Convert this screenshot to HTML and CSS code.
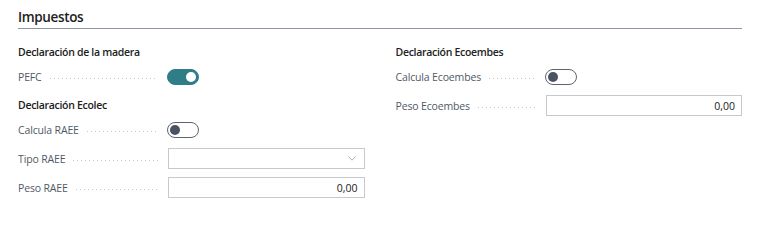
FILE: index.html
```html
<!DOCTYPE html>
<html lang="es">
<head>
<meta charset="utf-8">
<title>Impuestos</title>
<link rel="stylesheet" href="styles.css">
</head>
<body>
<div class="page">
  <h2 class="title">Impuestos</h2>
  <div class="columns">
    <div class="col">
      <div class="group">
        <div class="group-head">Declaración de la madera</div>
        <div class="row">
          <div class="label"><span class="label-text">PEFC</span><span class="leader"></span></div>
          <div class="field"><span class="toggle on"><span class="knob"></span></span></div>
        </div>
      </div>
      <div class="group group-next">
        <div class="group-head">Declaración Ecolec</div>
        <div class="row">
          <div class="label"><span class="label-text">Calcula RAEE</span><span class="leader"></span></div>
          <div class="field"><span class="toggle"><span class="knob"></span></span></div>
        </div>
        <div class="row row-input">
          <div class="label"><span class="label-text">Tipo RAEE</span><span class="leader"></span></div>
          <div class="field">
            <div class="box select">
              <span class="value"></span>
              <svg class="chev" width="8" height="5" viewBox="0 0 8 5"><path d="M0.4 0.5 L4 4.2 L7.6 0.5" fill="none" stroke="#a2a5a9" stroke-width="0.9"/></svg>
            </div>
          </div>
        </div>
        <div class="row row-input">
          <div class="label"><span class="label-text">Peso RAEE</span><span class="leader"></span></div>
          <div class="field"><div class="box num"><span class="value">0,00</span></div></div>
        </div>
      </div>
    </div>
    <div class="col">
      <div class="group">
        <div class="group-head">Declaración Ecoembes</div>
        <div class="row">
          <div class="label"><span class="label-text">Calcula Ecoembes</span><span class="leader"></span></div>
          <div class="field"><span class="toggle"><span class="knob"></span></span></div>
        </div>
        <div class="row row-input">
          <div class="label"><span class="label-text">Peso Ecoembes</span><span class="leader"></span></div>
          <div class="field"><div class="box num"><span class="value">0,00</span></div></div>
        </div>
      </div>
    </div>
  </div>
</div>
</body>
</html>
```
FILE: styles.css
```css
* { box-sizing: border-box; }
html, body {
  margin: 0;
  padding: 0;
  background: #ffffff;
}
body {
  font-family: "Open Sans", "Segoe UI", "Noto Sans", sans-serif;
  color: #212121;
  width: 768px;
  height: 207px;
  overflow: hidden;
}
.page {
  padding: 0 26px 0 18px;
}
.title {
  margin: 0;
  font-size: 13.5px;
  font-weight: 600;
  letter-spacing: -0.35px;
  line-height: 20px;
  padding-top: 7px;
  padding-bottom: 1px;
  height: 29px;
  border-bottom: 1px solid #8c95a0;
  color: #212121;
}
.columns {
  display: grid;
  grid-template-columns: 1fr 1fr;
  column-gap: 31px;
  margin-top: 12px;
}
.group-head {
  height: 22px;
  line-height: 22px;
  font-size: 10.5px;
  font-weight: 600;
  letter-spacing: -0.3px;
  color: #212121;
}
.group-next {
  margin-top: 3px;
}
.row {
  display: flex;
  align-items: center;
  height: 28px;
}
.row-input {
  height: 29px;
}
.label {
  width: 150px;
  flex: none;
  display: flex;
  align-items: center;
  padding-right: 10px;
  font-size: 10.5px;
  letter-spacing: -0.15px;
  color: #505a66;
}
.label-text {
  white-space: nowrap;
}
.leader {
  flex: 1;
  height: 1px;
  margin-left: 8px;
  margin-top: 3px;
  background-image: linear-gradient(to right, #c4c8cc 1px, transparent 1px);
  background-size: 4px 1px;
  background-repeat: repeat-x;
}
.field {
  flex: 1;
  display: flex;
  align-items: center;
}
.toggle {
  width: 32px;
  height: 16px;
  border-radius: 8px;
  border: 1px solid #5d636d;
  background: #ffffff;
  display: flex;
  align-items: center;
  padding: 0 2px;
  margin-left: -1px;
}
.toggle .knob {
  width: 10px;
  height: 10px;
  border-radius: 50%;
  background: #4b5263;
}
.toggle.on {
  background: #2f7e87;
  border-color: #2f7e87;
  justify-content: flex-end;
}
.toggle.on .knob {
  background: #ffffff;
}
.box {
  width: 100%;
  height: 21px;
  border: 1px solid #c6c9cd;
  background: #ffffff;
  display: flex;
  align-items: center;
  padding: 0 6px;
  font-size: 10.5px;
  color: #212121;
}
.num {
  justify-content: flex-end;
}
.select {
  justify-content: space-between;
  padding-right: 8px;
}
.chev {
  display: block;
}
```
